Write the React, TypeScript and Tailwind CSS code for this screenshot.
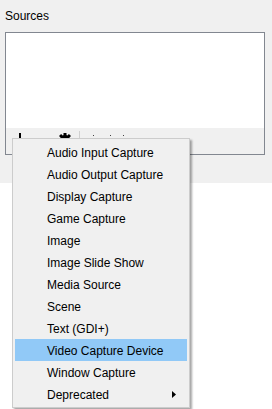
import React from 'react';

const items = [
  'Audio Input Capture',
  'Audio Output Capture',
  'Display Capture',
  'Game Capture',
  'Image',
  'Image Slide Show',
  'Media Source',
  'Scene',
  'Text (GDI+)',
  'Video Capture Device',
  'Window Capture',
  'Deprecated',
];

function ToolbarIcons() {
  return (
    <svg width="258" height="26" viewBox="0 0 258 26" className="block">
      {/* add */}
      <rect x="13" y="5" width="2" height="12" fill="#000" />
      <rect x="8" y="11" width="12" height="2" fill="#000" />
      {/* gear */}
      <g transform="translate(59 12)">
        <circle r="5" fill="#000" />
        <rect x="-1.5" y="-7" width="3" height="14" fill="#000" />
        <rect x="-7" y="-1.5" width="14" height="3" fill="#000" />
        <rect x="-1.5" y="-7" width="3" height="14" fill="#000" transform="rotate(45)" />
        <rect x="-1.5" y="-7" width="3" height="14" fill="#000" transform="rotate(-45)" />
        <circle r="2" fill="#f0f0f0" />
      </g>
      {/* separator */}
      <rect x="73" y="3" width="1" height="20" fill="#d0d0d0" />
      {/* small arrows */}
      <rect x="87" y="7" width="1" height="1" fill="#444" />
      <rect x="104" y="7" width="1" height="1" fill="#444" />
      <rect x="117" y="7" width="1" height="1" fill="#444" />
    </svg>
  );
}

export default function App() {
  return (
    <div className="relative w-[272px] h-[409px] bg-white text-[12px] text-black font-['Segoe_UI','Liberation_Sans',sans-serif]">
      <div className="h-[183px] bg-[#f0f0f0] px-[5px] pt-[8px]">
        <div className="h-[16px] leading-[16px]">Sources</div>
        <div className="mt-[8px] w-[260px] h-[123px] border border-[#828790] bg-white flex flex-col">
          <div className="flex-1" />
          <div className="h-[26px] bg-[#f0f0f0]">
            <ToolbarIcons />
          </div>
        </div>
      </div>

      <div className="absolute left-[12px] top-[138px] w-[178px] h-[270px] bg-[#f0f0f0] border border-[#cccccc] p-[2px] shadow-[2px_2px_2px_rgba(0,0,0,0.35)]">
        {items.map((label) => (
          <div
            key={label}
            className={
              label === 'Video Capture Device'
                ? 'h-[22px] leading-[22px] pl-[32px] pt-[1px] flex items-center justify-between bg-[#91c9f7]'
                : 'h-[22px] leading-[22px] pl-[32px] pt-[1px] flex items-center justify-between'
            }
          >
            <span>{label}</span>
            {label === 'Deprecated' && (
              <svg width="4" height="7" viewBox="0 0 4 7" className="mr-[11px]">
                <path d="M0 0 L4 3.5 L0 7 Z" fill="#000" />
              </svg>
            )}
          </div>
        ))}
      </div>
    </div>
  );
}
